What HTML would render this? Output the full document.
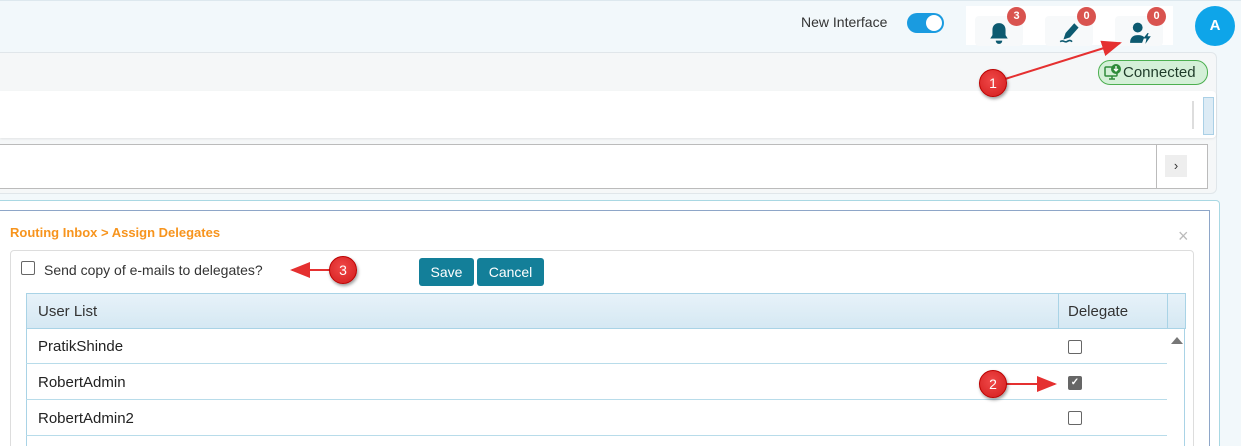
<!DOCTYPE html>
<html><head><style>
html,body{margin:0;width:1241px;height:446px;overflow:hidden}
body{background:#f2f8fb;font-family:"Liberation Sans",sans-serif;position:relative}
.a{position:absolute}
.cb{position:absolute;width:12px;height:12px;border:1px solid #666;border-radius:2px;background:#fff}
.badge{position:absolute;width:19px;height:19px;border-radius:50%;background:#d9534f;color:#fff;font-size:11px;font-weight:bold;text-align:center;line-height:19px}
.ann{position:absolute;width:26px;height:26px;border-radius:50%;background:radial-gradient(circle at 45% 40%,#f04848,#d21c1c);border:1px solid #b00;color:#fff;font-size:14px;text-align:center;line-height:26px;box-shadow:1px 2px 3px rgba(0,0,0,.4)}
.row{position:absolute;left:26px;width:1141px;height:35px;border-bottom:1px solid #b8dcea;font-size:15px;color:#222}
</style></head><body>
<div class="a" style="left:0;top:0;width:1241px;height:1px;background:#dde8ee"></div>
<div class="a" style="left:801px;top:14px;font-size:14px;color:#333">New Interface</div>
<div class="a" style="left:907px;top:13px;width:37px;height:20px;border-radius:10px;background:#1a9be0"><div class="a" style="left:19px;top:2px;width:16px;height:16px;border-radius:50%;background:#fff"></div></div>
<div class="a" style="left:966px;top:6px;width:207px;height:39px;background:#fff"></div>
<div class="a" style="left:975px;top:16px;width:48px;height:30px;background:#f7f9fa;border-radius:4px"></div>
<div class="a" style="left:1045px;top:16px;width:48px;height:30px;background:#f7f9fa;border-radius:4px"></div>
<div class="a" style="left:1115px;top:16px;width:48px;height:30px;background:#f7f9fa;border-radius:4px"></div>
<svg class="a" style="left:987px;top:21px" width="24" height="24" viewBox="0 0 22 22"><path d="M11 2c-4 0-6 3-6 6v5l-2 3h16l-2-3V8c0-3-2-6-6-6z M8 18a3 3 0 0 0 6 0z" fill="#0d5a70"/></svg>
<svg class="a" style="left:1058px;top:21px" width="26" height="24" viewBox="0 0 24 22"><path d="M15 2l4 4-8 9-6 2 2-6z" fill="#0d5a70"/><path d="M2 19c3-2 4 1 6 0s3-2 5 0" stroke="#0d5a70" fill="none" stroke-width="1.5"/></svg>
<svg class="a" style="left:1129px;top:21px" width="24" height="24" viewBox="0 0 22 22"><circle cx="8" cy="6" r="4.5" fill="#0d5a70"/><path d="M1 20c0-5 3-7 7-7s5 1 6 2l-2 5z" fill="#0d5a70"/><path d="M17 11l-4 5h3l-1 5 5-7h-3l1-3z" fill="#0d5a70"/></svg>
<div class="badge" style="left:1007px;top:7px">3</div>
<div class="badge" style="left:1077px;top:7px">0</div>
<div class="badge" style="left:1147px;top:7px">0</div>
<div class="a" style="left:1195px;top:6px;width:40px;height:40px;border-radius:50%;background:#0ea5e9;color:#fff;font-weight:bold;font-size:15px;text-align:center;line-height:40px">A</div>

<div class="a" style="left:0;top:52px;width:1216px;height:140px;background:#f5f7f8;border:1px solid #e0e6ea;border-left:none;border-radius:0 6px 6px 0"></div>
<div class="a" style="left:1098px;top:60px;width:108px;height:23px;border:1px solid #4caf50;border-radius:12px;background:#d4f0d8;font-size:15px;color:#1f3b2a;line-height:23px"><svg style="position:absolute;left:5px;top:3px" width="18" height="17" viewBox="0 0 18 17"><rect x="1" y="3" width="12" height="9" rx="1" fill="none" stroke="#2e8b3a" stroke-width="1.5"/><path d="M5 15h6M8 12v3" stroke="#2e8b3a" stroke-width="1.5"/><circle cx="12" cy="5" r="5" fill="#2e8b3a"/><path d="M12 2v5M10 5l2 2 2-2" stroke="#fff" stroke-width="1.3" fill="none"/></svg><span style="position:absolute;left:24px">Connected</span></div>
<div class="a" style="left:0;top:91px;width:1216px;height:47px;background:#fff;border-radius:0 4px 4px 0;box-shadow:0 1px 2px rgba(0,0,0,.08)"></div>
<div class="a" style="left:1192px;top:101px;width:2px;height:28px;background:#ddd"></div>
<div class="a" style="left:1203px;top:97px;width:9px;height:36px;background:#dcebf5;border:1px solid #aad0e6"></div>
<div class="a" style="left:0;top:144px;width:1207px;height:43px;background:#fff;border:1px solid #bbb;border-left:none"></div>
<div class="a" style="left:1156px;top:145px;width:1px;height:43px;background:#bbb"></div>
<div class="a" style="left:1165px;top:155px;width:22px;height:22px;background:#eee;text-align:center;font-size:13px;line-height:22px;color:#333">›</div>

<div class="a" style="left:0;top:200px;width:1219px;height:260px;background:#fff;border:1px solid #a9d8e3;border-left:none;border-radius:0 4px 0 0"></div>
<div class="a" style="left:0;top:210px;width:1209px;height:250px;border:1px solid #8ea6c8;border-left:none"></div>
<div class="a" style="left:10px;top:225px;font-size:13px;font-weight:bold;color:#f7941d">Routing Inbox &gt; Assign Delegates</div>
<div class="a" style="left:1178px;top:226px;font-size:18px;color:#bbb">×</div>
<div class="a" style="left:10px;top:250px;width:1182px;height:210px;border:1px solid #ddd;border-radius:4px"></div>
<div class="cb" style="left:21px;top:261px"></div>
<div class="a" style="left:44px;top:262px;font-size:14px;color:#333">Send copy of e-mails to delegates?</div>
<div class="a" style="left:419px;top:258px;width:55px;height:28px;background:#137f99;border-radius:3px;color:#fff;font-size:14px;text-align:center;line-height:28px">Save</div>
<div class="a" style="left:477px;top:258px;width:67px;height:28px;background:#137f99;border-radius:3px;color:#fff;font-size:14px;text-align:center;line-height:28px">Cancel</div>

<div class="a" style="left:26px;top:293px;width:1158px;height:34px;background:linear-gradient(#e7f2f9,#d5e8f3);border:1px solid #a9d3e6"></div>
<div class="a" style="left:1058px;top:294px;width:1px;height:34px;background:#a9d3e6"></div>
<div class="a" style="left:1167px;top:294px;width:1px;height:34px;background:#a9d3e6"></div>
<div class="a" style="left:38px;top:303px;font-size:15px;color:#333">User List</div>
<div class="a" style="left:1068px;top:303px;font-size:15px;color:#333">Delegate</div>
<div class="a" style="left:26px;top:328px;width:1px;height:118px;background:#a9d3e6"></div>
<div class="a" style="left:1184px;top:328px;width:1px;height:118px;background:#a9d3e6"></div>
<div class="row" style="top:328px"><span class="a" style="left:12px;top:10px">PratikShinde</span></div>
<div class="row" style="top:364px"><span class="a" style="left:12px;top:10px">RobertAdmin</span></div>
<div class="row" style="top:400px"><span class="a" style="left:12px;top:10px">RobertAdmin2</span></div>
<div class="cb" style="left:1068px;top:340px"></div>
<div class="cb" style="left:1068px;top:376px;background:#666;color:#fff;font-size:10px;line-height:12px;text-align:center;font-weight:bold">✓</div>
<div class="cb" style="left:1068px;top:411px"></div>
<div class="a" style="left:1171px;top:337px;width:0;height:0;border-left:6px solid transparent;border-right:6px solid transparent;border-bottom:7px solid #777"></div>

<svg class="a" style="left:0;top:0" width="1241" height="446">
<defs><marker id="m" markerWidth="10" markerHeight="8" refX="9" refY="4" orient="auto"><path d="M0 0L10 4 0 8z" fill="#e53030"/></marker></defs>
<line x1="1005" y1="79" x2="1120" y2="43" stroke="#e53030" stroke-width="2" marker-end="url(#m)"/>
<line x1="1005" y1="384" x2="1055" y2="384" stroke="#e53030" stroke-width="2" marker-end="url(#m)"/>
<line x1="332" y1="270" x2="292" y2="270" stroke="#e53030" stroke-width="2" marker-end="url(#m)"/>
</svg>
<div class="ann" style="left:979px;top:69px">1</div>
<div class="ann" style="left:979px;top:370px">2</div>
<div class="ann" style="left:329px;top:256px">3</div>
</body></html>
